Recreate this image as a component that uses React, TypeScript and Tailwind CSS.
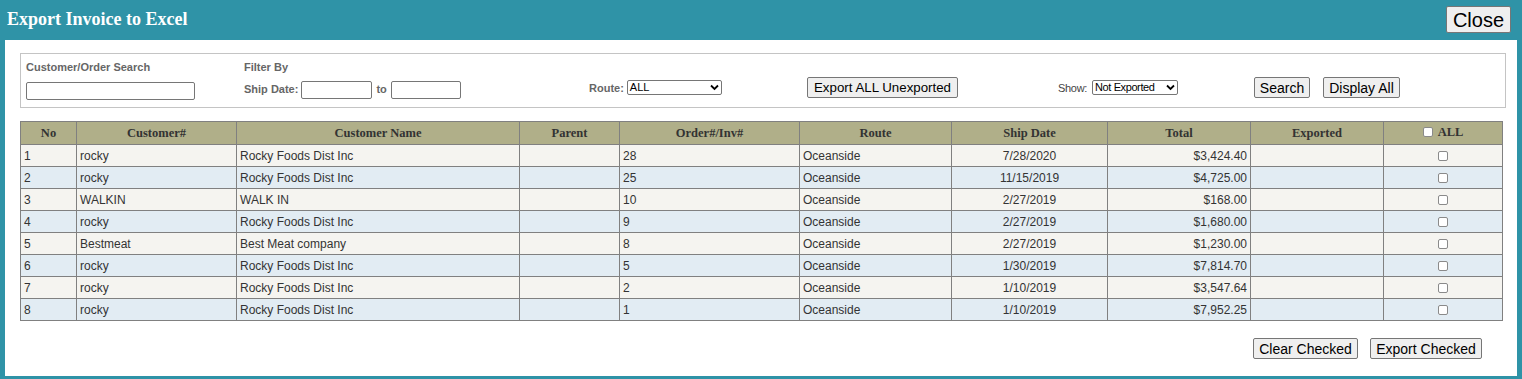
import React from "react"

const rows = [
  { no: 1, cust: "rocky", name: "Rocky Foods Dist Inc", order: "28", route: "Oceanside", date: "7/28/2020", total: "$3,424.40" },
  { no: 2, cust: "rocky", name: "Rocky Foods Dist Inc", order: "25", route: "Oceanside", date: "11/15/2019", total: "$4,725.00" },
  { no: 3, cust: "WALKIN", name: "WALK IN", order: "10", route: "Oceanside", date: "2/27/2019", total: "$168.00" },
  { no: 4, cust: "rocky", name: "Rocky Foods Dist Inc", order: "9", route: "Oceanside", date: "2/27/2019", total: "$1,680.00" },
  { no: 5, cust: "Bestmeat", name: "Best Meat company", order: "8", route: "Oceanside", date: "2/27/2019", total: "$1,230.00" },
  { no: 6, cust: "rocky", name: "Rocky Foods Dist Inc", order: "5", route: "Oceanside", date: "1/30/2019", total: "$7,814.70" },
  { no: 7, cust: "rocky", name: "Rocky Foods Dist Inc", order: "2", route: "Oceanside", date: "1/10/2019", total: "$3,547.64" },
  { no: 8, cust: "rocky", name: "Rocky Foods Dist Inc", order: "1", route: "Oceanside", date: "1/10/2019", total: "$7,952.25" },
]

const btnBase =
  "border border-[#767676] bg-[#efefef] rounded-[2px] px-[4px] leading-[18px] text-black whitespace-nowrap font-normal font-['Liberation_Sans',Arial,sans-serif]"
const btn = btnBase + " text-[14px]"

const th = "border border-[#808080] font-bold text-center font-['Liberation_Serif',Georgia,serif] text-[12.5px] text-[#333]"
const td = "border border-[#808080] px-[3px] h-[22px]"

function Check() {
  return <span className="inline-block w-[10px] h-[10px] border border-[#8a8a8a] rounded-[2px] bg-white align-middle" />
}

function Caret() {
  return (
    <svg width="9" height="7" viewBox="0 0 9 7">
      <path d="M1 1.5l3.5 3.5 3.5-3.5" fill="none" stroke="#000" strokeWidth="1.8" />
    </svg>
  )
}

export default function App() {
  return (
    <div className="w-[1522px] h-[379px] bg-[#2f93a7] flex flex-col font-['Liberation_Sans',Arial,sans-serif]">
      <div className="h-[40px] flex items-center justify-between pl-[7px] pr-[11px]">
        <h1 className="text-white font-bold text-[18px] font-['Liberation_Serif',Georgia,serif] -mt-[2px]">
          Export Invoice to Excel
        </h1>
        <button className="border border-[#767676] bg-[#efefef] rounded-[2px] h-[27px] w-[65px] text-[20px] leading-[24px] text-black mt-[-1px]">
          Close
        </button>
      </div>

      <div className="ml-[5px] w-[1512px] h-[336px] bg-white pt-[13px] px-[15px]">
        <div className="w-[1486px] h-[55px] border border-[#c4c4c4] flex text-[11px] text-[#666] font-bold">
          <div className="w-[223px] pl-[5px] pt-[5px]">
            <div>Customer/Order Search</div>
            <input className="mt-[6px] w-[169px] h-[18px] border border-[#767676] rounded-[2px]" />
          </div>
          <div className="w-[345px] pt-[5px]">
            <div>Filter By</div>
            <div className="mt-[5px] flex items-center">
              <span>Ship Date:</span>
              <input className="ml-[3px] w-[71px] h-[18px] border border-[#767676] rounded-[2px]" />
              <span className="ml-[4px]">to</span>
              <input className="ml-[4px] w-[70px] h-[18px] border border-[#767676] rounded-[2px]" />
            </div>
          </div>
          <div className="w-[218px] pt-[26px] flex items-start">
            <span>Route:</span>
            <span className="ml-[3px] w-[95px] h-[15px] border border-[#767676] rounded-[2px] flex items-center justify-between px-[2px] text-[11px] font-normal text-black">
              ALL
              <Caret />
            </span>
          </div>
          <div className="w-[251px] pt-[23px]">
            <button className={btnBase + " h-[21px] w-[151px] text-[13.3px]"}>Export ALL Unexported</button>
          </div>
          <div className="w-[196px] pt-[26px] flex items-start font-normal">
            <span className="text-[11px] tracking-[-0.3px] text-[#444]">Show:</span>
            <span className="ml-[5px] w-[86px] h-[15px] border border-[#767676] rounded-[2px] flex items-center justify-between px-[2px] text-[11px] tracking-[-0.4px] text-black">
              Not Exported
              <Caret />
            </span>
          </div>
          <div className="pt-[23px] flex items-start gap-[13px]">
            <button className={btn + " h-[21px] w-[56px]"}>Search</button>
            <button className={btn + " h-[21px] w-[77px]"}>Display All</button>
          </div>
        </div>

        <table className="mt-[13px] w-[1482px] border-collapse table-fixed text-[12px] text-[#333]">
          <colgroup>
            <col className="w-[56px]" />
            <col className="w-[160px]" />
            <col className="w-[283px]" />
            <col className="w-[100px]" />
            <col className="w-[180px]" />
            <col className="w-[152px]" />
            <col className="w-[156px]" />
            <col className="w-[143px]" />
            <col className="w-[133px]" />
            <col className="w-[119px]" />
          </colgroup>
          <thead>
            <tr className="bg-[#b0af89] h-[23px]">
              <th className={th}>No</th>
              <th className={th}>Customer#</th>
              <th className={th}>Customer Name</th>
              <th className={th}>Parent</th>
              <th className={th}>Order#/Inv#</th>
              <th className={th}>Route</th>
              <th className={th}>Ship Date</th>
              <th className={th}>Total</th>
              <th className={th}>Exported</th>
              <th className={th}>
                <span className="inline-flex items-center gap-[5px]">
                  <Check />
                  ALL
                </span>
              </th>
            </tr>
          </thead>
          <tbody>
            {rows.map((r, i) => (
              <tr key={r.no} className={i % 2 === 0 ? "bg-[#f5f4f0]" : "bg-[#e2ecf3]"}>
                <td className={td}>{r.no}</td>
                <td className={td}>{r.cust}</td>
                <td className={td}>{r.name}</td>
                <td className={td}></td>
                <td className={td}>{r.order}</td>
                <td className={td}>{r.route}</td>
                <td className={td + " text-center"}>{r.date}</td>
                <td className={td + " text-right"}>{r.total}</td>
                <td className={td}></td>
                <td className={td + " text-center"}>
                  <Check />
                </td>
              </tr>
            ))}
          </tbody>
        </table>

        <div className="mt-[17px] w-[1482px] flex justify-end gap-[12px] pr-[20px]">
          <button className={btn + " h-[21px] w-[105px]"}>Clear Checked</button>
          <button className={btn + " h-[21px] w-[112px]"}>Export Checked</button>
        </div>
      </div>
    </div>
  )
}
